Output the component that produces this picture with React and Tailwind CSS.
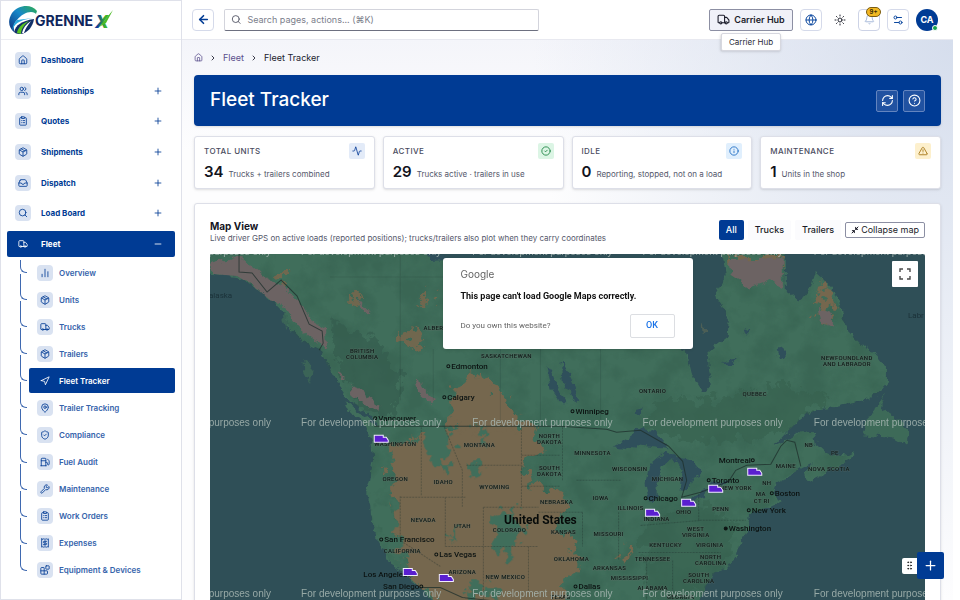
import React from 'react';
import {
  Activity, ArrowLeft, Bell, Blocks, ChartNoAxesColumn, ChevronRight, CircleCheck, CircleHelp,
  ClipboardList, Fuel, Globe, GripVertical, House, Inbox, Info, MapPin, Minimize2, Minus,
  Navigation, Package, Plus, Receipt, RefreshCw, Search, Settings2, ShieldCheck, Sun,
  TriangleAlert, Truck, Users, Wrench,
} from 'lucide-react';

const NAV = [
  { label: 'Dashboard', icon: House, leaf: true },
  { label: 'Relationships', icon: Users },
  { label: 'Quotes', icon: ClipboardList },
  { label: 'Shipments', icon: Package },
  { label: 'Dispatch', icon: Inbox },
  { label: 'Load Board', icon: Search },
  { label: 'Fleet', icon: Truck, active: true },
];

const FLEET_NAV = [
  { label: 'Overview', icon: ChartNoAxesColumn },
  { label: 'Units', icon: Package },
  { label: 'Trucks', icon: Truck },
  { label: 'Trailers', icon: Package },
  { label: 'Fleet Tracker', icon: Navigation, active: true },
  { label: 'Trailer Tracking', icon: MapPin },
  { label: 'Compliance', icon: ShieldCheck },
  { label: 'Fuel Audit', icon: Fuel },
  { label: 'Maintenance', icon: Wrench },
  { label: 'Work Orders', icon: ClipboardList },
  { label: 'Expenses', icon: Receipt },
  { label: 'Equipment & Devices', icon: Blocks },
];

const STATS = [
  { label: 'TOTAL UNITS', value: 34, note: 'Trucks + trailers combined', icon: Activity, tone: 'bg-[#e3ebf8] text-[#0b3f99]' },
  { label: 'ACTIVE', value: 29, note: 'Trucks active · trailers in use', icon: CircleCheck, tone: 'bg-[#dcf5e5] text-[#16803c]' },
  { label: 'IDLE', value: 0, note: 'Reporting, stopped, not on a load', icon: Info, tone: 'bg-[#e0effd] text-[#1767c0]' },
  { label: 'MAINTENANCE', value: 1, note: 'Units in the shop', icon: TriangleAlert, tone: 'bg-[#fdf0cd] text-[#a1700c]' },
];

// Map drawing data, all in the map's own coordinate space
const REGIONS = [
  ['BRITISH', 362, 353], ['COLUMBIA', 362, 359], ['ALBERTA', 437, 330], ['SASKATCHEWAN', 506, 358],
  ['ONTARIO', 652, 393], ['QUEBEC', 754, 396], ['NEWFOUNDLAND', 846, 360], ['AND LABRADOR', 846, 366],
  ['WASHINGTON', 395, 446], ['MONTANA', 479, 447], ['NORTH', 549, 438], ['DAKOTA', 549, 444],
  ['SOUTH', 549, 470], ['DAKOTA', 549, 476], ['OREGON', 395, 481], ['IDAHO', 443, 484],
  ['WYOMING', 494, 489], ['NEBRASKA', 556, 504], ['NEVADA', 423, 522], ['UTAH', 462, 528],
  ['COLORADO', 509, 532], ['KANSAS', 563, 534], ['CALIFORNIA', 402, 553], ['ARIZONA', 462, 574],
  ['NEW MEXICO', 505, 579], ['OKLAHOMA', 571, 561], ['TEXAS', 560, 599], ['MINNESOTA', 592, 455],
  ['WISCONSIN', 629, 471], ['MICHIGAN', 667, 481], ['IOWA', 600, 500], ['ILLINOIS', 630, 510],
  ['INDIANA', 656, 521], ['OHIO', 683, 514], ['PENN', 720, 511], ['NEW YORK', 735, 490],
  ['NH', 766, 485], ['MAINE', 785, 468], ['NB', 808, 447], ['PE', 834, 455],
  ['NOVA SCOTIA', 828, 471], ['MA', 760, 496], ['CT RI', 761, 503], ['MISSOURI', 608, 536],
  ['WEST', 695, 531], ['VIRGINIA', 695, 537], ['KENTUCKY', 665, 547], ['VIRGINIA', 709, 547],
  ['TENNESSEE', 652, 561], ['NORTH', 710, 559], ['CAROLINA', 710, 565], ['ARKANSAS', 609, 570],
  ['MISSISSIPPI', 629, 580], ['SOUTH', 698, 577], ['CAROLINA', 698, 583], ['ALABAMA', 652, 590],
  ['GEORGIA', 680, 599],
];

const CITIES = [
  ['Edmonton', 448, 366], ['Calgary', 444, 397], ['Vancouver', 375, 418], ['Winnipeg', 572, 411],
  ['San Francisco', 381, 539], ['Las Vegas', 436, 554], ['Los Angeles', 409, 574, 'end'],
  ['San Diego', 421, 586, 'end'], ['Chicago', 645, 498], ['Toronto', 708, 480],
  ['Montreal', 752, 460, 'end'], ['Boston', 771, 493], ['New York', 748, 510],
  ['Washington', 725, 528], ['Dallas', 575, 586],
];

const UNITS = [
  [373, 434], [402, 567], [438, 573], [644, 508], [680, 498], [707, 484], [746, 467],
];

const WATERMARKS = [255, 426, 597].flatMap((y) => [131, 301, 472, 642, 813].map((x) => [x, y]));

const Logo = () => (
  <svg viewBox="0 0 104 30" className="h-[30px] w-[104px]" role="img" aria-label="Grennex">
    <defs>
      <linearGradient id="ring" x1="0" y1="1" x2="1" y2="0">
        <stop offset="0" stopColor="#0b2f7c" />
        <stop offset="0.55" stopColor="#1688c9" />
        <stop offset="1" stopColor="#2fae4d" />
      </linearGradient>
      <linearGradient id="cross" x1="0" y1="0" x2="1" y2="0">
        <stop offset="0.2" stopColor="#0c3c9c" />
        <stop offset="0.7" stopColor="#3db32b" />
      </linearGradient>
    </defs>
    <path d="M28 6C22-2 9 0 3 8c-5 8-3 15 2 19 0-5-1-8 3-12 4-5 9-8 14-8 3 0 4 1 5 2z" fill="url(#ring)" />
    <path d="M5 27c2-7 7-11 20-13-1 7-6 15-15 15-2 0-4-1-5-2z" fill="#123069" />
    <path d="M8 28c1-6 6-10 12-12-5 4-8 8-8 13z" fill="#58c322" />
    <path d="M13 28c1-5 4-9 9-12-3 4-6 8-7 12z" fill="#fff" />
    <path d="M8 15c-4 4-5 8-4 11 0-6 5-11 20-13z" fill="#28a9dd" />
    <text x="26" y="21" className="fill-[#10265c] font-['Inter'] text-[14px] font-bold">GRENNE</text>
    <text x="86" y="23" fill="url(#cross)" className="font-['Inter'] text-[18px] font-extrabold italic">X</text>
    <path d="M90 22 104 5 97 18z" fill="#4dbb27" />
  </svg>
);

const Sidebar = () => (
  <aside className="flex w-[182px] shrink-0 flex-col border border-[#dfe1ea] bg-white text-[8px] text-[#003b94]">
    <div className="flex h-[39px] shrink-0 items-center border-b border-[#ebecf2] pl-2">
      <Logo />
    </div>
    <nav className="px-1.5 pt-[7px]">
      <ul className="flex h-[210px] flex-col justify-between">
        {NAV.map(({ label, icon: Icon, leaf, active }) => (
          <li key={label}>
            <button
              type="button"
              className={`flex h-[26px] w-full items-center rounded-[2px] pr-3 pl-2 font-bold ${active ? 'bg-[#003b94] text-white' : ''}`}
            >
              <span className={`flex size-4 items-center justify-center rounded ${active ? '' : 'bg-[#d9e2f1]'}`}>
                <Icon size={10} />
              </span>
              <span className="ml-2.5 flex-1 text-left">{label}</span>
              {!leaf && (active ? <Minus size={10} /> : <Plus size={10} />)}
            </button>
          </li>
        ))}
      </ul>
      <ul className="mt-[3px] flex h-[323px] flex-col justify-between pl-[22px]">
        {FLEET_NAV.map(({ label, icon: Icon, active }, i) => (
          <li key={label} className="relative">
            <span
              className={`absolute -left-[9px] w-[7px] rounded-bl-md border-b border-l border-[#3f69b0] ${i === 0 ? 'top-0 h-[13px]' : '-top-[13px] h-[26px]'}`}
            />
            <a
              href="#"
              className={`flex h-[25px] items-center rounded-[2px] pl-2 font-semibold ${active ? 'bg-[#003b94] text-white' : 'text-[#3563ab]'}`}
            >
              <span className={`flex size-4 items-center justify-center rounded ${active ? '' : 'bg-[#d9e2f1] text-[#003b94]'}`}>
                <Icon size={10} />
              </span>
              <span className="ml-1.5">{label}</span>
            </a>
          </li>
        ))}
      </ul>
    </nav>
  </aside>
);

const Header = () => (
  <header className="flex h-10 shrink-0 items-center border-b border-[#e8e9f0] bg-white pr-[15px] pl-[10px]">
    <button type="button" aria-label="Back" className="flex size-[22px] items-center justify-center rounded border border-[#d5daea] text-[#003b94]">
      <ArrowLeft size={13} strokeWidth={3} />
    </button>
    <label className="ml-2.5 flex h-[22px] w-[315px] items-center rounded-[2px] border border-x-[#d3d4dc] border-t-[#d3d4dc] border-b-[#6d7080] px-1.5">
      <Search size={11} className="text-[#4d5060]" />
      <input
        type="text"
        aria-label="Search"
        placeholder="Search pages, actions... (⌘K)"
        className="ml-1.5 w-full bg-transparent text-[9px] outline-none placeholder:text-[#7b7e8b]"
      />
    </label>
    <div className="ml-auto flex items-center gap-[7px]">
      <div className="relative">
        <button type="button" className="flex h-[22px] w-[84px] items-center justify-center gap-1 rounded-[2px] border border-[#8c8fa3] bg-[#f0f1f8] text-[9px] font-semibold text-[#1c1d2b]">
          <Truck size={13} />
          Carrier Hub
        </button>
        <div role="tooltip" className="absolute top-6 left-1/2 z-10 -translate-x-1/2 rounded-[2px] border border-[#d6d7df] bg-white px-[7px] text-[8px] leading-4 whitespace-nowrap text-[#2b2c38] shadow">
          Carrier Hub
        </div>
      </div>
      <button type="button" aria-label="Language" className="flex size-[22px] items-center justify-center rounded border border-[#d5daea] text-[#0c489f]">
        <Globe size={12} />
      </button>
      <button type="button" aria-label="Theme" className="flex size-[22px] items-center justify-center text-[#22242f]">
        <Sun size={12} />
      </button>
      <button type="button" aria-label="Notifications" className="relative flex size-[22px] items-center justify-center rounded border border-[#cdd3e6] text-[#9fb3d6]">
        <Bell size={11} />
        <span className="absolute -top-[3px] left-[7px] flex h-[10px] w-[15px] items-center justify-center rounded-full border border-[#7a5c12] bg-[#f2b822] text-[6px] font-bold text-[#3a2c05]">
          9+
        </span>
      </button>
      <button type="button" aria-label="Settings" className="flex size-[22px] items-center justify-center rounded border border-[#d5daea] text-[#0c489f]">
        <Settings2 size={12} />
      </button>
      <button type="button" className="relative flex size-[22px] items-center justify-center rounded-full bg-[#003b94] text-[9px] font-bold text-white">
        CA
        <span className="absolute right-0 bottom-0 size-[6px] rounded-full border border-white bg-[#16a34a]" />
      </button>
    </div>
  </header>
);

const MapCanvas = () => (
  <svg viewBox="210 254 714 400" preserveAspectRatio="xMinYMin slice" className="block size-full bg-[#2f4f57]">
    <defs>
      <filter id="rough" x="-5%" y="-5%" width="110%" height="110%" colorInterpolationFilters="sRGB">
        <feTurbulence type="fractalNoise" baseFrequency="0.12" numOctaves="3" seed="4" />
        <feDisplacementMap in="SourceGraphic" scale="9" xChannelSelector="R" yChannelSelector="G" />
      </filter>
      <filter id="ragged" x="-10%" y="-10%" width="120%" height="120%" colorInterpolationFilters="sRGB">
        <feTurbulence type="fractalNoise" baseFrequency="0.09" numOctaves="4" seed="9" />
        <feDisplacementMap in="SourceGraphic" scale="30" xChannelSelector="R" yChannelSelector="G" />
      </filter>
      <filter id="speckle" x="0" y="0" width="100%" height="100%" colorInterpolationFilters="sRGB">
        <feTurbulence type="fractalNoise" baseFrequency="0.04" numOctaves="5" seed="21" />
        <feColorMatrix values="0 0 0 0 0.18  0 0 0 0 0.34  0 0 0 0 0.28  0 3 0 0 -1.2" />
      </filter>
      <path
        id="mainland"
        d="M200 240H432L440 258 470 262 560 266 612 262 632 290 640 325 662 342 685 351 690 372 703 393 711 384 708 366 707 352 727 336 728 318 714 295 725 275 720 240H784V290L798 302 808 290 814 272 830 286 840 310 848 332 862 346 876 355 886 368 886 382 878 392 862 401 838 406 814 410 800 419 784 434 772 447 790 438 800 431 814 432 816 445 824 452 842 456 853 450 850 459 826 472 806 482 803 473 812 462 800 468 784 478 774 484 772 494 780 500 764 508 748 515 746 530 738 545 735 557 728 567 714 572 706 584 698 604 694 660H446L436 606 425 592 411 579 400 568 390 562 384 549 376 535 371 519 370 505 366 492 369 478 373 456 370 438 364 423 378 425 373 417 350 402 337 383 326 363 320 350 303 342 290 330 283 313 270 300 250 284 237 276 200 273z"
      />
      <clipPath id="land">
        <use href="#mainland" />
      </clipPath>
    </defs>

    <g filter="url(#rough)">
      <use href="#mainland" fill="#406e5b" />
      <path d="M345 402 372 420 367 425 350 412z" fill="#406e5b" />
      <path d="M884 393 879 407 896 418 909 430 905 445 891 437 862 434 866 420z" fill="#3d6a58" />
      <path d="M302 357 312 364 310 383 303 370zM282 312 290 322 286 330z" fill="#3b6457" />
      <path d="M701 322 707 332 702 334z" fill="#4c5f56" />
    </g>

    <g clipPath="url(#land)">
      <rect x="200" y="240" width="740" height="420" filter="url(#speckle)" opacity="0.3" />
      <path d="M705 400 780 385 830 400 760 440 700 440 640 430 660 400z" fill="#37614f" opacity="0.6" filter="url(#ragged)" />
      <path d="M640 530 700 500 735 520 720 590 650 600z" fill="#37614f" opacity="0.5" filter="url(#ragged)" />
      <path d="M330 320 380 340 400 380 396 420 366 410 340 380z" fill="#355b4e" opacity="0.6" filter="url(#ragged)" />
      {/* dry land */}
      <g filter="url(#ragged)" fill="#75674e">
        <path d="M394 440 412 444 422 430 440 428 456 422 500 422 536 426 540 454 522 466 536 486 556 488 566 510 556 526 574 540 578 566 562 580 568 660 440 660 436 600 414 584 398 556 396 530 394 500 390 470z" />
        <path d="M452 388 478 374 498 386 516 412 524 428 474 432 448 420z" />
        <path d="M396 334 416 324 424 338 412 348zM418 298 430 292 428 302zM350 290 362 300 350 306zM274 272 284 272 284 284 272 282z" opacity="0.9" />
        <path d="M812 272 822 282 832 300 828 326 818 320 820 298zM722 256 782 256 780 268 740 272z" />
        <path d="M622 546 632 550 624 562z" />
      </g>
      {/* forest pockets inside the dry belt */}
      <g filter="url(#ragged)" fill="#406e5b">
        <path d="M422 420 446 424 452 446 446 474 432 464 426 440zM464 458 482 466 476 478zM490 516 516 508 520 536 508 564 496 548zM448 532 456 528 452 544zM464 582 500 586 504 596 468 594zM478 428 492 436 484 444zM368 500 392 500 398 540 410 560 398 560 376 530z" />
      </g>
      {/* bare rock along the coast range */}
      <g filter="url(#rough)" fill="#6c6363">
        <path d="M210 264 240 256 262 276 282 286 298 300 312 322 326 330 327 350 312 338 298 326 284 308 268 300 250 282 212 274z" />
        <path d="M350 384 362 388 366 396 378 404 376 411 362 402 352 394zM356 296 370 314 362 310zM414 376 422 382 424 390 436 398 432 404 420 394zM340 372 346 378 340 378z" />
        <path d="M728 260 782 258 782 288 770 280 748 288 730 276zM818 308 832 312 832 328 820 322z" />
      </g>
    </g>

    {/* lakes */}
    <g fill="#2f4f5b" filter="url(#rough)">
      <path d="M612 447 626 438 640 428 654 432 668 448 652 446 638 444 626 449z" />
      <path d="M648 502 645 484 650 464 664 452 676 456 662 466 656 484 656 500z" />
      <path d="M672 456 690 460 702 474 692 478 688 492 680 490 682 470z" />
      <path d="M680 502 696 493 708 489 704 496 688 503z" />
      <path d="M708 485 726 478 730 482 714 487z" />
      <path d="M560 360 566 370 574 386 579 403 572 398 562 380zM546 366 552 374 558 390 566 402 560 402 550 388z" />
      <path d="M776 350 784 348 785 358 778 360zM720 362 738 358 734 364zM742 328 750 330 746 334zM634 410 642 408 640 416z" />
      <path d="M424 254H444V260L432 261z" />
    </g>

    {/* borders */}
    <g fill="none" stroke="#1e2f2c" strokeWidth="1" opacity="0.75">
      <path d="M239 254V272L252 273 267 292 281 280 297 296 309 324 322 331 323 343 319 350" />
      <path d="M374 426H560L606 429 616 432 640 430 668 446 682 461 686 480 681 497 700 492 728 481 735 470 746 465 770 464 780 446 786 440 794 442 800 466" />
      <path d="M422 587 440 587 462 597 490 600" />
      <path d="M400 496V540L440 566M400 497H466M445 497V546M421 427V496M444 427 462 470V507M521 426V506M466 465H521M483 507H538M483 507V546M445 546H538M483 546V600M528 546V590M521 455H560M521 486H560M538 512H582M576 480H620M582 512V546M618 512V560M562 427V480M640 525 700 520M638 552H720M646 560V600M672 560V600M698 494V520H745" strokeDasharray="2 1" opacity="0.45" />
      <path d="M400 254V400M330 277H443M433 349V400M500 349V426M540 349V426M600 349V420" opacity="0.2" />
    </g>

    <g className="font-['Roboto'] text-[6px] font-medium tracking-wider" textAnchor="middle" fill="#0f1b18" stroke="#6a746e" strokeWidth="1" strokeOpacity="0.35" paintOrder="stroke">
      {REGIONS.map(([name, x, y]) => (
        <text key={`${name}-${x}-${y}`} x={x} y={y}>{name}</text>
      ))}
    </g>
    <g className="font-['Roboto'] text-[8px] font-medium" fill="#0c1312">
      {CITIES.map(([name, x, y, anchor = 'start']) => (
        <g key={name}>
          <circle cx={x} cy={y} r="1.5" fill={name === 'Washington' ? '#0c1312' : 'none'} stroke="#0c1312" />
          <text x={anchor === 'end' ? x - 2 : x + 3} y={y + 3} textAnchor={anchor}>{name}</text>
        </g>
      ))}
    </g>
    <text x="540" y="524" textAnchor="middle" className="font-['Roboto'] text-[12px] font-bold" fill="#070b0a">United States</text>
    <g className="font-['Roboto'] text-[8px]" fill="#1b3138">
      <text x="209" y="298">alaska</text>
      <text x="907" y="318">Labr</text>
    </g>

    <g className="font-['Liberation_Sans'] text-[10px]" fill="#a9b9b4" fillOpacity="0.85">
      {WATERMARKS.map(([x, y]) => (
        <text key={`${x}-${y}`} x={x} y={y}>For development purposes only</text>
      ))}
    </g>

    {UNITS.map(([x, y]) => (
      <path
        key={`${x}-${y}`}
        transform={`translate(${x} ${y})`}
        d="M1 1H10V3H13L15 6V8H1z"
        fill="#5a1fd0"
        stroke="#f1ecff"
      />
    ))}
  </svg>
);

const MapCard = () => (
  <section className="mt-[14px] rounded-[3px] border border-[#dddfe8] bg-white px-[15px] pt-4 pb-4 shadow-sm">
    <div className="flex h-[34px] items-start justify-between">
      <div>
        <h2 className="text-[10px] leading-3 font-bold text-[#14151f]">Map View</h2>
        <p className="text-[8px] leading-3 text-[#55586b]">
          Live driver GPS on active loads (reported positions); trucks/trailers also plot when they carry coordinates
        </p>
      </div>
      <div className="flex items-center gap-1 text-[9px] text-[#1a1b27]">
        <button type="button" className="h-5 rounded-[2px] bg-[#003b94] px-[7px] font-medium text-white">All</button>
        <button type="button" className="h-5 rounded-[2px] bg-[#fbfbfd] px-[7px] font-medium">Trucks</button>
        <button type="button" className="h-5 rounded-[2px] bg-[#fbfbfd] px-[7px] font-medium">Trailers</button>
        <button type="button" className="flex h-4 items-center gap-0.5 rounded-[2px] border border-[#8c8fa3] px-[5px]">
          <Minimize2 size={8} strokeWidth={3} />
          Collapse map
        </button>
      </div>
    </div>
    <div className="relative h-[400px] overflow-hidden rounded-[2px]">
      <MapCanvas />
      <div role="dialog" aria-label="Google Maps error" className="absolute top-1 left-1/2 flex h-[91px] w-[250px] -translate-x-1/2 flex-col rounded-[3px] bg-white px-[18px] pt-2 font-['Roboto'] shadow">
        <span className="font-['Inter'] text-[10px] leading-4 text-[#636363]">Google</span>
        <p className="mt-2 text-[9px] leading-3 font-bold text-[#111]">This page can't load Google Maps correctly.</p>
        <div className="mt-3 flex items-center justify-between">
          <a href="#" className="text-[8px] text-[#646464]">Do you own this website?</a>
          <button type="button" className="h-6 w-[45px] rounded-[2px] border border-[#dcdee2] text-[9px] font-medium text-[#1a73e8]">OK</button>
        </div>
      </div>
      <button type="button" aria-label="Toggle fullscreen" className="absolute top-[7px] right-[7px] flex size-[26px] items-center justify-center rounded-[1px] bg-white">
        <svg viewBox="0 0 12 12" className="size-3" fill="none" stroke="#4a4a4a" strokeWidth="1.4">
          <path d="M1 4V1H4M8 1H11V4M11 8V11H8M4 11H1V8" />
        </svg>
      </button>
    </div>
  </section>
);

const App = () => {
  return (
    <div className="flex h-screen overflow-hidden bg-white font-['Inter',sans-serif]">
      <Sidebar />
      <div className="mr-[7px] flex min-w-0 flex-1 flex-col">
        <Header />
        <main className="min-h-0 flex-1 overflow-hidden bg-[radial-gradient(ellipse_420px_560px_at_100%_0%,#d6deed_0%,#eaeef700_100%),linear-gradient(180deg,#f4f5fa_0px,#fdfdfe_110px)] px-3">
          <nav aria-label="Breadcrumb" className="flex h-[35px] items-center gap-[6px] text-[9px] text-[#5a4f8c]">
            <House size={9} />
            <ChevronRight size={8} className="text-[#3c3d4c]" strokeWidth={3} />
            <a href="#">Fleet</a>
            <ChevronRight size={8} className="text-[#3c3d4c]" strokeWidth={3} />
            <span className="text-[#20212d]">Fleet Tracker</span>
          </nav>

          <div className="flex h-[51px] items-center justify-between rounded bg-[#003b94] px-4 text-white shadow-sm">
            <h1 className="text-[19px] font-medium">Fleet Tracker</h1>
            <div className="flex gap-[5px]">
              <button type="button" aria-label="Refresh" className="flex size-[22px] items-center justify-center rounded-[2px] border border-[#6384bf] bg-[#2152a1]">
                <RefreshCw size={13} />
              </button>
              <button type="button" aria-label="Help" className="flex size-[22px] items-center justify-center rounded-[2px] border border-[#6384bf] bg-[#2152a1]">
                <CircleHelp size={13} />
              </button>
            </div>
          </div>

          <div className="mt-2.5 grid grid-cols-4 gap-2">
            {STATS.map(({ label, value, note, icon: Icon, tone }) => (
              <div key={label} className="rounded-[3px] border border-[#dddfe8] bg-white px-[9px] pt-[6px] pb-[5px] shadow-sm">
                <div className="flex h-4 items-center justify-between">
                  <h3 className="text-[8px] font-medium tracking-wider text-[#4a4c5e]">{label}</h3>
                  <span className={`flex size-4 items-center justify-center rounded-[2px] ${tone}`}>
                    <Icon size={10} />
                  </span>
                </div>
                <div className="mt-0.5 flex items-baseline gap-[5px]">
                  <span className="text-[15px] leading-[22px] font-semibold text-[#12131c]">{value}</span>
                  <span className="text-[8px] text-[#55586b]">{note}</span>
                </div>
              </div>
            ))}
          </div>

          <MapCard />
        </main>
      </div>

      <div className="fixed right-4 bottom-[21px] flex items-center">
        <button type="button" aria-label="Move" className="flex h-4 w-[15px] items-center justify-center rounded-l-[2px] bg-white text-[#222]">
          <GripVertical size={11} />
        </button>
        <button type="button" aria-label="Add" className="flex size-[27px] items-center justify-center rounded-[2px] bg-[#003b94] text-white">
          <Plus size={15} />
        </button>
      </div>
    </div>
  );
};

export default App;
